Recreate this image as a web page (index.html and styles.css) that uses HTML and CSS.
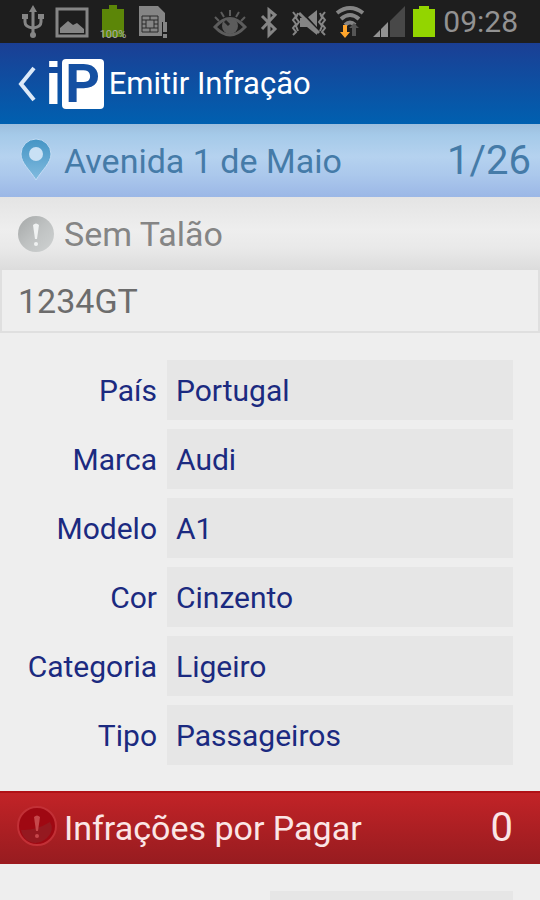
FILE: index.html
```html
<!DOCTYPE html>
<html lang="pt">

<head>
    <meta charset="UTF-8">
    <meta name="viewport" content="width=device-width, initial-scale=1.0">
    <title>Emitir Infração</title>
    <link rel="stylesheet" href="styles.css">
</head>

<body>

    <div class="screen">
        <div class="status-bar">
            <div class="status-icons">
                <!-- usb -->
                <svg width="22" height="34" viewBox="0 0 22 34" fill="none" stroke="#858585" stroke-width="3">
                    <path d="M11 5v25M3 12v5q0 5 8 6q8-1 8-6v-5" />
                    <path d="M11 0l4 7H7zM0 9h6v5H0zM16 9h6v5h-6z" fill="#858585" stroke="none" />
                    <circle cx="11" cy="30" r="3" fill="#858585" stroke="none" />
                </svg>
                <!-- image -->
                <svg width="32" height="34" viewBox="0 0 32 34">
                    <rect x="1" y="4" width="30" height="27" fill="none" stroke="#858585" stroke-width="3" />
                    <path d="M4 28v-5l8-7 5 4 4-2 7 6v4z" fill="#858585" />
                </svg>
                <!-- battery level -->
                <svg width="26" height="34" viewBox="2 0 26 34">
                    <path d="M4 4h7V0h8v4h7v28H4z" fill="#5c8608" />
                    <text x="15" y="33" text-anchor="middle" class="level">100%</text>
                </svg>
                <!-- sim card -->
                <svg width="30" height="34" viewBox="0 0 30 34">
                    <path d="M1 1h19l7 7v9h-3v14H1z" fill="#858585" />
                    <path d="M4 11h16v16H4zM8 15h8v8H8zM12 11v4M12 23v4M4 15h4M4 19h4M4 23h4M16 15h4M16 19h4M16 23h4" fill="none" stroke="#2a2a2a" stroke-width="1" />
                    <path d="M25 17h4v10h-4zM25 29h4v4h-4z" fill="#858585" />
                </svg>
            </div>
            <div class="status-icons right">
                <!-- eye -->
                <svg width="34" height="34" viewBox="0 0 34 34" fill="none" stroke="#5c5c5c" stroke-width="2">
                    <path d="M2 22q15-17 30 0q-15 16-30 0z" stroke-width="3" />
                    <circle cx="17" cy="21" r="7" fill="#5c5c5c" />
                    <path d="M16 20l-4-4" stroke="#222" stroke-width="3" />
                    <path d="M17 5v6M8 7l3 5M26 7l-3 5M2 12l4 4M32 12l-4 4" />
                </svg>
                <!-- bluetooth -->
                <svg width="28" height="34" viewBox="-5 0 28 34" fill="none" stroke="#858585" stroke-width="3">
                    <path d="M2 11l13 13-6 6V5l6 5L2 24" />
                </svg>
                <!-- muted, vibrating -->
                <svg width="36" height="34" viewBox="0 0 36 34" fill="none" stroke="#858585" stroke-width="2">
                    <path d="M9 13h7l10-8v25l-10-8H9z" fill="#858585" stroke="none" />
                    <path d="M10 6l19 21" stroke="#1e1e1e" stroke-width="2" />
                    <path d="M8 8l20 20" stroke-width="3" />
                    <path d="M2 7l3 4-3 4 3 4-3 4 3 4-3 3M7 8l-2 5 3 4-3 4 2 5M34 7l-3 4 3 4-3 4 3 4-3 4 3 3M29 8l2 5-3 4 3 4-2 5" />
                </svg>
                <!-- wifi -->
                <svg width="30" height="34" viewBox="0 0 30 34" fill="none" stroke="#858585" stroke-width="4">
                    <path d="M2 8q13-10 26 0M6 14q9-8 18 0M10 20q5-5 10 0" />
                    <path d="M14 23l5-5 5 5h-3v8h-4v-8z" fill="#555" stroke="none" />
                    <path d="M8 20h4v7h3l-5 6-5-6h3z" fill="#ffa52c" stroke="none" />
                </svg>
                <!-- signal -->
                <svg width="32" height="34" viewBox="0 0 32 34">
                    <path d="M32 1v31H17V16z" fill="#484848" />
                    <path d="M0 32l7-7v7zM8 24l7-7v15H8z" fill="#929292" />
                </svg>
                <!-- battery -->
                <svg width="22" height="34" viewBox="0 0 22 34">
                    <path d="M0 4h6V1h10v3h6v28H0z" fill="#93d500" />
                </svg>
                <span class="clock">09:28</span>
            </div>
        </div>

        <header class="action-bar">
            <button class="back-button" aria-label="Voltar">
                <svg width="18" height="36" viewBox="0 0 18 36">
                    <path d="M16 2L3 18l13 16" fill="none" stroke="#dce9f8" stroke-width="4" />
                </svg>
            </button>
            <div class="logo"><span class="logo-i">i</span><span class="logo-p">P</span></div>
            <h1>Emitir Infração</h1>
        </header>

        <div class="bar street">
            <svg class="bar-icon" width="38" height="48" viewBox="0 0 38 48">
                <defs>
                    <linearGradient id="pin" x1="0" y1="0" x2="0" y2="1">
                        <stop offset="0" stop-color="#4495c5" />
                        <stop offset="1" stop-color="#82bbdf" />
                    </linearGradient>
                </defs>
                <path d="M18 2a15 15 0 0 0-15 15c0 9 9 16 15 26c6-10 15-17 15-26a15 15 0 0 0-15-15z" fill="url(#pin)" stroke="#c3dcf4" stroke-width="1" />
                <circle cx="18" cy="17" r="7" fill="#c9e1f5" />
            </svg>
            <span class="bar-text">Avenida 1 de Maio</span>
            <span class="bar-count">1/26</span>
        </div>

        <div class="bar ticket">
            <svg class="bar-icon" width="38" height="38" viewBox="0 0 38 38">
                <defs>
                    <linearGradient id="badge" x1="0" y1="0" x2="1" y2="1">
                        <stop offset="0" stop-color="#a5a8a8" />
                        <stop offset="0.5" stop-color="#bfc2c2" />
                        <stop offset="1" stop-color="#cfd2d2" />
                    </linearGradient>
                </defs>
                <circle cx="18" cy="19" r="18" fill="url(#badge)" />
                <path d="M15 10q3-3 6 0l-2 14h-2z" fill="#f0f2f2" />
                <circle cx="18" cy="29" r="2" fill="#f0f2f2" />
            </svg>
            <span class="bar-text">Sem Talão</span>
        </div>

        <input class="plate" type="text" value="1234GT" aria-label="Matrícula">

        <form class="vehicle">
            <label for="pais">País</label>
            <input type="text" id="pais" value="Portugal">
            <label for="marca">Marca</label>
            <input type="text" id="marca" value="Audi">
            <label for="modelo">Modelo</label>
            <input type="text" id="modelo" value="A1">
            <label for="cor">Cor</label>
            <input type="text" id="cor" value="Cinzento">
            <label for="categoria">Categoria</label>
            <input type="text" id="categoria" value="Ligeiro">
            <label for="tipo">Tipo</label>
            <input type="text" id="tipo" value="Passageiros">
        </form>

        <div class="bar unpaid">
            <svg class="bar-icon" width="42" height="42" viewBox="0 0 42 42">
                <circle cx="21" cy="19" r="19" fill="#9f0812" stroke="#c23036" stroke-width="2" />
                <path d="M5 23q14 1 29-8q5 8-3 16q-9 8-19 3q-6-4-7-11z" fill="#951920" />
                <path d="M18 10q3-3 6 0l-2 14h-2z" fill="#c6474b" />
                <circle cx="21" cy="29" r="2" fill="#c6474b" />
            </svg>
            <span class="bar-text">Infrações por Pagar</span>
            <span class="bar-count">0</span>
        </div>

        <div class="details">
            <input type="text" aria-label="Infração">
        </div>
    </div>

</body>

</html>
```
FILE: styles.css
```css
* {
    box-sizing: border-box;
}

body {
    margin: 0;
    background-color: #eee;
    font-family: Roboto, "Liberation Sans", sans-serif;
}

.screen {
    height: 100vh;
    overflow: hidden;
    display: flex;
    flex-direction: column;
}

.screen > * {
    flex-shrink: 0;
}

svg {
    display: block;
    flex-shrink: 0;
    overflow: visible;
}

/* Status bar */
.status-bar {
    height: 43px;
    padding: 0 22px;
    display: flex;
    align-items: center;
    justify-content: space-between;
    background-color: #1e1e1e;
}

.status-icons {
    display: flex;
    align-items: center;
    gap: 12px;
}

.status-icons.right {
    gap: 8px;
}

.level {
    font-size: 11px;
    fill: #aaa;
}

.clock {
    font-size: 30px;
    line-height: 34px;
    color: #929292;
}

/* Action bar */
.action-bar {
    height: 81px;
    padding: 0 18px;
    display: flex;
    align-items: center;
    background: linear-gradient(#1b3f94, #0060b0);
}

.back-button {
    padding: 0;
    border: none;
    background: none;
    cursor: pointer;
}

.logo {
    display: flex;
    align-items: center;
    margin-left: 9px;
    color: white;
    font-weight: 700;
    line-height: 50px;
}

.logo-i {
    font-family: "Liberation Sans", sans-serif;
    font-size: 60px;
}

.logo-p {
    width: 42px;
    height: 50px;
    border-radius: 4px;
    background-color: white;
    color: #1550a2;
    font-size: 54px;
    text-align: center;
}

.action-bar h1 {
    margin: 0 0 0 5px;
    font-size: 31px;
    line-height: 40px;
    font-weight: 400;
    color: white;
}

/* Bars */
.bar {
    height: 73px;
    padding: 0 9px 0 18px;
    display: flex;
    align-items: center;
    font-size: 34px;
    line-height: 40px;
}

.bar-text {
    flex-grow: 1;
    margin-left: 8px;
}

.bar-count {
    font-size: 40px;
}

.street {
    color: #457ba8;
    background: linear-gradient(#9dbedd, #a5cae9 15%, #b5d2ef 45%, #abc8ec 70%, #9bb7e6);
}

.ticket {
    color: #858585;
    background: linear-gradient(#e4e4e4, #eee 45%, #e9e9e9 70%, #dcdcdc);
}

.unpaid {
    padding: 0 27px 0 16px;
    border-top: 2px solid #b01116;
    border-bottom: 2px solid #9c1a1e;
    color: #fbe6e6;
    background: linear-gradient(#c22327, #981c20);
}

.unpaid .bar-text {
    margin-left: 6px;
}

/* Fields */
input {
    min-width: 0;
    border: none;
    border-radius: 0;
    outline: none;
    font-family: inherit;
}

.plate {
    width: 100%;
    height: 63px;
    padding: 0 16px;
    border: 2px solid #dfdfdf;
    border-top: none;
    background-color: #eee;
    font-size: 34px;
    color: #6c6c6c;
}

.vehicle {
    display: grid;
    grid-template-columns: 157px 1fr;
    gap: 9px 10px;
    align-items: center;
    padding: 27px 27px 26px 0;
    font-size: 30px;
    color: #1b2a80;
}

.vehicle label {
    text-align: right;
}

.vehicle input {
    height: 60px;
    padding: 0 9px;
    background-color: #e6e6e6;
    font-size: 30px;
    color: #1b2a80;
}

.details {
    padding: 27px 27px 0 50%;
}

.details input {
    display: block;
    width: 100%;
    height: 60px;
    background-color: #e6e6e6;
}
```
